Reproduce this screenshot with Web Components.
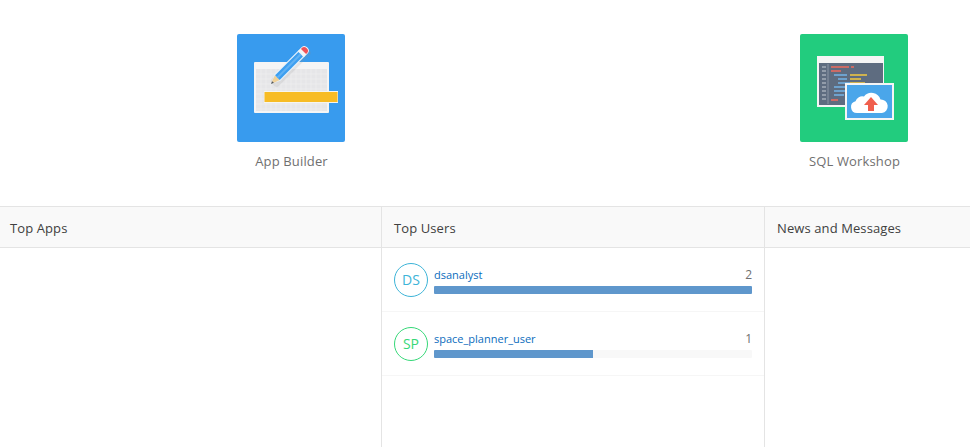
<!doctype html>
<html>
<head>
<meta charset="utf-8">
<title>Workspace</title>
<style>
  html, body { margin: 0; height: 100%; overflow: hidden; background: #fff; }
  body { font-family: "Open Sans", "Noto Sans", sans-serif; color: #404040; }
</style>
</head>
<body>
<home-page></home-page>

<template id="builder-icon">
  <svg width="108" height="108" viewBox="0 0 108 108">
    <rect x="17" y="28" width="75" height="51" rx="1" fill="#f5f5f5"/>
    <rect x="19" y="35" width="71" height="42" fill="#e6e6e8"/>
    <path d="M19 40h71M19 45h71M19 50h71M19 55h71M19 60h71M19 65h71M19 70h71M19 75h71M24 35v42M29 35v42M34 35v42M39 35v42M44 35v42M49 35v42M54 35v42M59 35v42M64 35v42M69 35v42M74 35v42M79 35v42M84 35v42" stroke="#eeeeef" stroke-width=".8" fill="none"/>
    <rect x="27" y="57" width="74" height="12" fill="#f5f5f0"/>
    <rect x="27.500" y="58" width="73" height="10" fill="#f7bc25"/>
    <g transform="translate(34 50) rotate(-45)">
      <rect x="0" y="-5" width="50" height="10" rx="3" fill="#8f8f8f" opacity=".16" transform="translate(1 2)"/>
      <path d="M0 0 L9 -4.300 H44 V4.300 H9 Z" fill="#e8f3fc"/>
      <path d="M0 0 L3 -1.400 V1.400 Z" fill="#555"/>
      <path d="M3 -1.400 L9 -3.500 V3.500 L3 1.400 Z" fill="#f0d199"/>
      <rect x="9" y="-3.200" width="33" height="6.400" fill="#3d9ff0"/>
      <rect x="9" y="-1" width="33" height="2" fill="#62b2f3"/>
      <path d="M43 -4.300 H47.500 Q51.500 -4.300 51.500 0 Q51.500 4.300 47.500 4.300 H43 Z" fill="#f4f4f4"/>
      <path d="M46 -3.600 H47.500 Q50.500 -3.600 50.500 0 Q50.500 3.600 47.500 3.600 H46 Z" fill="#f0525a"/>
    </g>
  </svg>
</template>

<template id="workshop-icon">
  <svg width="108" height="108" viewBox="0 0 108 108">
    <rect x="17" y="22" width="67" height="51" fill="#f5f5f5"/>
    <rect x="19" y="29" width="64" height="42" fill="#5e6c80"/>
    <path d="M22 33h4M22 37h4M22 41h4M22 45h4M22 49h4M22 53h4M22 57h4M22 61h4M22 65h4" stroke="#c6ccd4" stroke-width="1.200"/>
    <path d="M28 30v40" stroke="#8a95a5" stroke-width="1"/>
    <path d="M31 33h18M51 33h3M31 37h10M31 66h7" stroke="#ef6b5d" stroke-width="1.300"/>
    <path d="M34 41h13M38 45h9M38 49h12M34 53h12M34 57h12M34 61h10" stroke="#74b4e8" stroke-width="1.300"/>
    <path d="M50 41h17M50 45h11M50 49h15" stroke="#f4c93f" stroke-width="1.300"/>
    <rect x="45" y="49" width="49" height="37" fill="#f5f5f5"/>
    <rect x="47" y="51" width="45" height="33" fill="#4aa6ea"/>
    <path d="M57 79 a6 6 0 0 1 -1.500 -11.800 a7 7 0 0 1 8.500 -4.700 a9.500 9.500 0 0 1 16.500 3 a6.800 6.800 0 0 1 1.500 13.500 Z" fill="#fff"/>
    <path d="M71 63 L78 71 H74 V77 H68 V71 H64 Z" fill="#f05f4d"/>
  </svg>
</template>

<script>
function register(name, clz) {
  !customElements.get(name) && customElements.define(name, clz);
}

class Base extends HTMLElement {
  constructor() {
    super();
    this.attachShadow({ mode: "open" });
  }
  connectedCallback() {
    this.shadowRoot.innerHTML = `<style>${this.constructor.styles}</style>${this.render()}`;
    this.onMount();
  }
  onMount() {}
  render() {
    return "";
  }
}

class AppTile extends Base {
  render() {
    return `
      <div class="tile"></div>
      <div class="label"><slot></slot></div>
    `;
  }
  onMount() {
    const tpl = document.getElementById(this.getAttribute("icon"));
    this.shadowRoot.querySelector(".tile").append(tpl.content.cloneNode(true));
  }
}
AppTile.styles = `
  :host { display: flex; flex-direction: column; align-items: center; color: #707070; font-size: 13px; }
  .tile { width: 108px; height: 108px; border-radius: 2px; background: var(--tile); }
  svg { display: block; }
  .label { margin-top: 10px; padding-left: 2px; line-height: 18px; letter-spacing: .15px; white-space: nowrap; }
`;

class InfoPanel extends Base {
  render() {
    return `
      <header>${this.getAttribute("heading")}</header>
      <div class="body"><slot></slot></div>
    `;
  }
}
InfoPanel.styles = `
  :host { display: flex; flex-direction: column; min-width: 0; border-left: 1px solid #e4e4e4; }
  :host(:first-child) { border-left: 0; }
  header {
    height: 41px; box-sizing: border-box; padding: 2px 12px 0; display: flex; align-items: center;
    background: #f9f9f9; border-bottom: 1px solid #e4e4e4;
    font-size: 13px; letter-spacing: .1px; color: #404040; white-space: nowrap;
  }
  :host(:first-child) header { padding-left: 10px; }
  .body { flex: 1; }
`;

class UserRow extends Base {
  render() {
    const pct = this.getAttribute("pct");
    return `
      <div class="avatar">${this.getAttribute("initials")}</div>
      <div class="info">
        <div class="top">
          <a>${this.getAttribute("name")}</a>
          <span>${this.getAttribute("count")}</span>
        </div>
        <div class="track"><div class="fill" style="width:${pct}%"></div></div>
      </div>
    `;
  }
}
UserRow.styles = `
  :host { display: flex; align-items: center; gap: 6px; height: 64px; box-sizing: border-box; padding: 0 12px; border-bottom: 1px solid #f6f6f6; }
  .avatar {
    width: 34px; height: 34px; box-sizing: border-box; flex: none; border-radius: 50%;
    border: 1px solid var(--accent); color: var(--accent);
    display: flex; align-items: center; justify-content: center; font-size: 14px;
  }
  .info { flex: 1; min-width: 0; }
  .top { display: flex; justify-content: space-between; align-items: center; height: 16px; box-sizing: border-box; padding-top: 2px; margin-bottom: 5px; }
  a { color: #0b6cbd; font-size: 11px; }
  span { color: #707070; font-size: 12px; }
  .track { height: 8px; background: #f8f8f8; border-radius: 1px; overflow: hidden; }
  .fill { height: 100%; background: #5f97cc; }
`;

class HomePage extends Base {
  render() {
    return `
      <section class="hero">
        <app-tile icon="builder-icon" style="--tile:#389bee">App Builder</app-tile>
        <app-tile icon="workshop-icon" style="--tile:#22cc7e">SQL Workshop</app-tile>
      </section>
      <section class="panels">
        <info-panel heading="Top Apps"></info-panel>
        <info-panel heading="Top Users">
          <user-row initials="DS" name="dsanalyst" count="2" pct="100" style="--accent:#3db4d8"></user-row>
          <user-row initials="SP" name="space_planner_user" count="1" pct="50" style="--accent:#36d878"></user-row>
        </info-panel>
        <info-panel heading="News and Messages"></info-panel>
      </section>
    `;
  }
}
HomePage.styles = `
  :host { display: flex; flex-direction: column; height: 447px; width: 970px; overflow: hidden; }
  .hero { display: grid; grid-template-columns: 563px 563px; padding: 34px 0 0 9px; height: 206px; box-sizing: border-box; }
  .panels { flex: 1; display: grid; grid-template-columns: 381px 383px 1fr; border-top: 1px solid #e4e4e4; }
`;

register("app-tile", AppTile);
register("info-panel", InfoPanel);
register("user-row", UserRow);
register("home-page", HomePage);
</script>
</body>
</html>
